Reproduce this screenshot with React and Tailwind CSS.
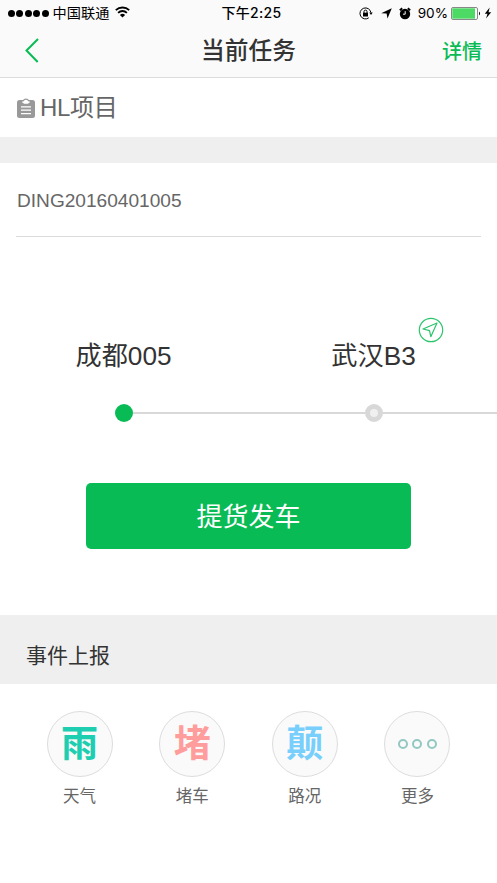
import React from 'react';

const stations = [
    { id: 1, name: '成都005', current: true },
    { id: 2, name: '武汉B3', current: false },
];

const events = [
    { label: '天气', glyph: '雨', color: 'text-[#1dceb0]' },
    { label: '堵车', glyph: '堵', color: 'text-[#ff9c9c]' },
    { label: '路况', glyph: '颠', color: 'text-[#78cffc]' },
    { label: '更多', glyph: null, color: '' },
];

const StatusBar = () => {
    return (
        <div className="grid h-[25px] grid-cols-[1fr_auto_1fr] items-center pl-2 pr-[5px] text-[14px] leading-[25px] text-black">
            <div className="flex items-center">
                <div className="flex gap-[1.4px]">
                    {[1, 2, 3, 4, 5].map(dot => (
                        <span key={dot} className="h-[7px] w-[7px] rounded-full bg-black" />
                    ))}
                </div>
                <span className="ml-1 text-[14.2px] leading-[26px]">中国联通</span>
                <svg className="mb-[2px] ml-[6px]" width="15" height="12" viewBox="0 0 15 12" fill="none" stroke="#000" strokeWidth="1.8">
                    <path d="M0.8 4.2a9.6 9.6 0 0 1 13.4 0" />
                    <path d="M3.1 6.8a6.3 6.3 0 0 1 8.8 0" />
                    <path d="M7.5 11.6 4.9 9a3.7 3.7 0 0 1 5.2 0z" fill="#000" stroke="none" />
                </svg>
            </div>
            <span className="ml-[3px] font-['Inter','Noto_Sans_CJK_SC',sans-serif] text-[14px] font-medium leading-[24px] tracking-[0.3px]">下午2:25</span>
            <div className="flex items-center justify-end">
                <svg width="14" height="13" viewBox="0 0 14 13" fill="none" stroke="#000">
                    <path d="M11.9 5.5A5.5 5.5 0 1 0 9.8 10.8" />
                    <path d="M10.3 5.6h3.4L12 8z" fill="#000" stroke="none" />
                    <rect x="4" y="5.7" width="5" height="3.8" fill="#000" stroke="none" />
                    <path d="M5 6V4.6a1.5 1.5 0 0 1 3 0V6" />
                </svg>
                <svg className="ml-2" width="11" height="11" viewBox="0 0 11 11">
                    <path d="M10.8 0.2 6.5 10.5 5.6 5.6 0.2 5.2z" />
                </svg>
                <svg className="ml-[7px]" width="12" height="13" viewBox="0 0 12 13">
                    <circle cx="6" cy="7" r="5.2" />
                    <path d="M0.8 3.2 3.2 1.2M11.2 3.2 8.8 1.2" stroke="#000" strokeWidth="1.8" />
                    <path d="M6.2 4.2v3H4" fill="none" stroke="#fafafa" />
                </svg>
                <span className="ml-[7px] font-['Inter',sans-serif] text-[13.6px]">90%</span>
                <svg className="ml-[3px]" width="30" height="13" viewBox="0 0 30 13">
                    <rect x="0.5" y="0.5" width="26" height="12" rx="1.5" fill="#fff" stroke="#888" />
                    <rect x="1.3" y="1.3" width="22.7" height="10.4" fill="#4cd964" />
                    <path d="M28 4.5q2 2 0 4z" />
                </svg>
                <svg className="ml-[3px]" width="8" height="12" viewBox="0 0 8 12">
                    <path d="M5.7 0.5 0.8 6.7h2.7L2 11.5l5.2-6.2H4.5z" />
                </svg>
            </div>
        </div>
    );
};

const NavBar = () => {
    return (
        <div className="grid h-[52px] grid-cols-[1fr_auto_1fr] items-center px-[15px]">
            <svg className="mb-[2px] ml-[9px]" width="16" height="26" viewBox="0 0 16 26" fill="none" stroke="#09bb55" strokeWidth="2">
                <path d="M14 2 2.5 13.5 13.7 25" />
            </svg>
            <h1 className="text-[23.7px] font-medium leading-[48px] text-[#333]">当前任务</h1>
            <button className="pt-[2px] text-right text-[20px] font-medium text-[#09bb55]">详情</button>
        </div>
    );
};

const Route = () => {
    return (
        <div className="ml-[-1.5px] flex pt-[100px]">
            {stations.map(station => (
                <div key={station.id} className="w-[250px] shrink-0">
                    <div className="text-center text-[26.2px] leading-[38px] text-[#333]">
                        <span className="relative">
                            {station.name}
                            {!station.current && (
                                <svg className="absolute -right-[28px] -top-[24px]" width="26" height="26" viewBox="0 0 26 26" fill="none" stroke="#2bc46c" strokeWidth="1.2">
                                    <circle cx="13" cy="13" r="11.7" />
                                    <path d="M19 6 5 12l6.5 1.7 1.3 6z" strokeLinejoin="round" />
                                </svg>
                            )}
                        </span>
                    </div>
                    <div className="mt-[29px] flex h-[18px] items-center">
                        <div className={station.current ? 'h-[2px] flex-1' : 'h-[2px] flex-1 bg-[#d8d8d8]'} />
                        {station.current ? (
                            <div className="h-[18px] w-[18px] rounded-full bg-[#09bb55]" />
                        ) : (
                            <div className="h-[18px] w-[18px] rounded-full border-[5px] border-[#d8d8d8] bg-[#f0f0f0]" />
                        )}
                        <div className="h-[2px] flex-1 bg-[#d8d8d8]" />
                    </div>
                </div>
            ))}
        </div>
    );
};

const EventList = () => {
    return (
        <div className="flex justify-between px-[46.5px] pt-[27px]">
            {events.map(event => (
                <div key={event.label} className="flex w-[66px] flex-col items-center">
                    <div className="flex h-[66px] w-[66px] items-center justify-center rounded-full border border-[#ddd] bg-[#fafafa]">
                        {event.glyph ? (
                            <span className={`text-[37px] font-bold leading-none ${event.color}`}>{event.glyph}</span>
                        ) : (
                            <div className="flex gap-[4.5px]">
                                {[1, 2, 3].map(dot => (
                                    <span key={dot} className="h-[10px] w-[10px] rounded-full border-2 border-[#93c8c0]" />
                                ))}
                            </div>
                        )}
                    </div>
                    <span className="mt-[7px] text-[16.5px] leading-6 text-[#666]">{event.label}</span>
                </div>
            ))}
        </div>
    );
};

const App = () => {
    return (
        <div className="h-[883px] w-full overflow-hidden bg-white font-['Liberation_Sans','Noto_Sans_CJK_SC',sans-serif]">
            <header className="h-[78px] border-b border-[#dcdcdc] bg-[#fafafa]">
                <StatusBar />
                <NavBar />
            </header>
            <div className="flex h-[59px] items-center pl-[17px] text-[#666]">
                <svg width="18" height="20" viewBox="0 0 18 20">
                    <rect x="0" y="2" width="18" height="18" rx="2.5" fill="#999" />
                    <path d="M5.5 1.8h7v2.4L11 5.7H7L5.5 4.2z" fill="#fff" />
                    <path d="M4.8 2.6h1.7a2.6 2 0 0 1 5 0h1.7" fill="none" stroke="#999" strokeWidth="1.3" />
                    <path d="M4 8.8h10M4 12.2h10M4 15.6h10" stroke="#fff" strokeWidth="1.3" />
                </svg>
                <span className="ml-[5px] text-[24px] leading-9 tracking-[-0.3px]">HL项目</span>
            </div>
            <div className="h-[26px] bg-[#efefef]" />
            <div className="mx-4 h-[74px] border-b border-[#dcdcdc] pl-[1px] text-[19.1px] leading-[75px] text-[#666]">
                DING20160401005
            </div>
            <Route />
            <button className="mx-auto mt-[61px] block h-[66px] w-[325px] rounded-[5px] bg-[#09bb55] pt-[3px] text-[26px] text-white">
                提货发车
            </button>
            <h2 className="mt-[66px] h-[69px] bg-[#efefef] pl-[26px] pt-[6px] text-[21px] leading-[69px] text-[#333]">事件上报</h2>
            <EventList />
        </div>
    );
};

export default App;
